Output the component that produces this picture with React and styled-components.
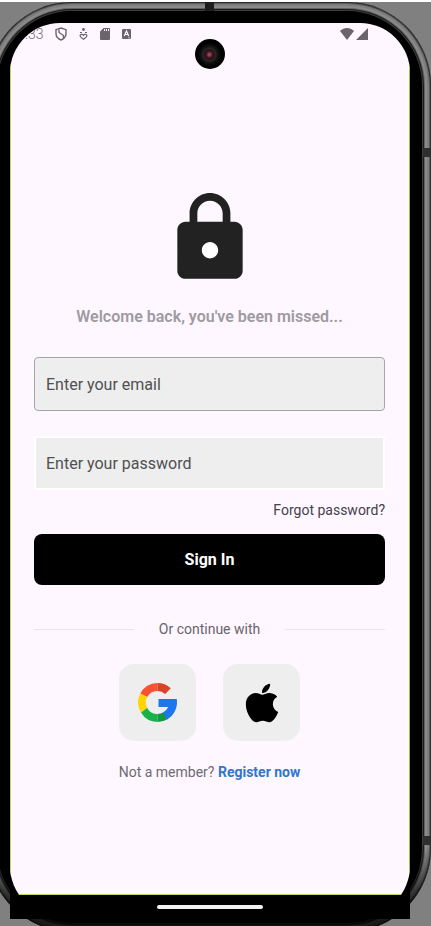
import React from "react";
import styled, { createGlobalStyle } from "styled-components";
import { FaApple } from "react-icons/fa";

const GlobalStyle = createGlobalStyle`
  *, *::before, *::after { box-sizing: border-box; }
  body {
    margin: 0;
    background: #808080;
    font-family: Roboto, "Liberation Sans", sans-serif;
  }
`;

const Stage = styled.div`
  display: flex;
  flex-direction: column;
  height: 100vh;
  min-height: 820px;
  overflow: hidden;
  border-top: 2px solid #ffffff;
`;

const Phone = styled.div`
  position: relative;
  flex: 1;
  display: flex;
  margin: 0 0 -6px -12px;
  padding: 21px 21px 13px 22px;
  border-radius: 84px;
  background: #000000;
  box-shadow:
    inset 0 0 0 1px #2c2c2c,
    inset 0 0 0 2px #5c5c5c,
    inset 0 0 0 4px #7e7e7e,
    inset 0 0 0 6px #8a8a8a,
    inset 0 0 0 7px #626262,
    inset 0 0 0 8px #1c1c1c,
    inset 0 0 0 9px #3c3c3c;

  &::after {
    content: "";
    position: absolute;
    inset: auto 0 0 0;
    height: 84px;
    border-radius: 0 0 84px 84px;
    background: linear-gradient(to bottom, rgba(0, 0, 0, 0), rgba(0, 0, 0, 0.8) 70%);
    pointer-events: none;
  }
`;

const TopBand = styled.span`
  position: absolute;
  top: 0;
  left: 50%;
  width: 9px;
  height: 9px;
  margin-left: -5px;
  background: #1e1e1e;
`;

const SideBand = styled.span`
  position: absolute;
  right: 0;
  top: ${(p) => p.$top};
  width: 8px;
  height: 9px;
  background: #2e2e2e;
`;

const Well = styled.div`
  position: relative;
  z-index: 1;
  flex: 1;
  display: flex;
  padding-bottom: 3px;
  border-radius: 50px 50px 0 0;
  background: #000000;
`;

const Screen = styled.div`
  flex: 1;
  display: flex;
  flex-direction: column;
  border-radius: 50px;
  overflow: hidden;
`;

const Display = styled.div`
  flex: 1;
  background: #fef7ff;
  border: solid #bdd75c;
  border-width: 0 1px 1px;
  border-right-color: #a5c040;
`;

const Camera = styled.span`
  position: absolute;
  top: 16px;
  left: 50%;
  width: 30px;
  height: 30px;
  margin-left: -15px;
  border-radius: 50%;
  background: radial-gradient(circle at 48% 52%, #8b4a58 0 1px, #4a1520 3px, #241016 5px, #2c2a2c 6px, #151515 8px, #0a0a0a 10px, #000000 12px);
`;

const StatusBar = styled.header`
  display: flex;
  align-items: center;
  justify-content: space-between;
  height: 22px;
  padding: 0 41px 0 14px;
  color: #6a656b;
`;

const StatusGroup = styled.div`
  display: flex;
  align-items: center;
  gap: ${(p) => p.$gap}px;
`;

const Clock = styled.span`
  font-size: 14px;
  line-height: 16px;
  font-weight: 300;
`;

const Form = styled.form`
  display: flex;
  flex-direction: column;
  align-items: center;
  padding: 144px 24px 24px 23px;
`;

const Welcome = styled.h1`
  margin: 20px 0 30px;
  font-size: 16px;
  line-height: 20px;
  font-weight: 600;
  color: #9f9aa1;
`;

const Field = styled.input`
  width: 100%;
  height: 54px;
  padding: 0 11px;
  border: ${(p) => (p.$outlined ? "1px solid #a6a5a8" : "2px solid #ffffff")};
  border-radius: ${(p) => (p.$outlined ? 4 : 2)}px;
  outline: none;
  background: #eeeeee;
  font: 400 16px/20px Roboto, sans-serif;
  color: #49454c;

  & + & { margin-top: 25px; padding: 0 10px; }
  &::placeholder { color: #505052; opacity: 1; }
`;

const ForgotLink = styled.a`
  align-self: flex-end;
  margin: 10px 0 14px;
  font-size: 14px;
  line-height: 20px;
  color: #45404a;
  text-decoration: none;
`;

const SignInButton = styled.button`
  width: 100%;
  height: 51px;
  border: 0;
  border-radius: 8px;
  background: #000000;
  font: 700 16px/20px Roboto, sans-serif;
  color: #ffffff;
`;

const Divider = styled.div`
  display: flex;
  align-items: center;
  gap: 25px;
  width: 100%;
  margin: 34px 0 25px;
  font-size: 14px;
  line-height: 20px;
  color: #69646c;

  &::before, &::after {
    content: "";
    flex: 1;
    height: 1px;
    background: #ebe5ed;
  }
`;

const Providers = styled.div`
  display: flex;
  gap: 27px;
`;

const ProviderButton = styled.button`
  display: flex;
  align-items: center;
  justify-content: center;
  width: 77px;
  height: 77px;
  padding: 0;
  border: 0;
  border-radius: 15px;
  background: #eeeeee;
  color: #000000;
`;

const Signup = styled.p`
  margin: 21px 0 0;
  font-size: 14px;
  line-height: 20px;
  color: #6e6971;
`;

const RegisterLink = styled.a`
  font-weight: 700;
  color: #2f77cc;
  text-decoration: none;
`;

const NavBar = styled.footer`
  display: flex;
  align-items: center;
  justify-content: center;
  height: 21px;
  padding-top: 3px;
  background: #000000;
`;

const Handle = styled.span`
  width: 106px;
  height: 4px;
  border-radius: 2px;
  background: #f2f2f2;
`;

const LockIcon = () => (
  <svg width="98" height="98" viewBox="0 0 24 24" aria-hidden="true">
    <circle cx="12" cy="15" r="2.4" fill="#ffffff" />
    <path
      fill="#222222"
      d="M18 8h-1V6c0-2.760-2.240-5-5-5S7 3.240 7 6v2H6c-1.100 0-2 .9-2 2v10c0 1.100.9 2 2 2h12c1.100 0 2-.9 2-2V10c0-1.100-.9-2-2-2zm-6 9c-1.100 0-2-.9-2-2s.9-2 2-2 2 .9 2 2-.9 2-2 2zm3.100-9H8.900V6c0-1.710 1.390-3.100 3.100-3.100 1.710 0 3.100 1.390 3.100 3.100v2z"
    />
  </svg>
);

const GoogleIcon = () => (
  <svg width="39" height="39" viewBox="0 0 39 39" aria-hidden="true">
    <path fill="#fa5130" d="M2.300 10.500A19.500 19.500 0 0 1 19.500 0V8A11.500 11.500 0 0 0 9.200 14z" />
    <path fill="#d8432a" d="M19.500 0A19.500 19.500 0 0 1 32.800 5.200L27.200 10.900A11.500 11.500 0 0 0 19.500 8z" />
    <path fill="#fed402" d="M2.300 10.500L9.200 14A11.500 11.500 0 0 0 9.200 25L3 29.500A19.500 19.500 0 0 1 2.300 10.500z" />
    <path fill="#19b149" d="M3 29.500L9.200 25A11.500 11.500 0 0 0 19.500 31V39A19.500 19.500 0 0 1 3 29.500z" />
    <path fill="#129a40" d="M19.500 31A11.500 11.500 0 0 0 25.500 29.300L29.500 36.200A19.500 19.500 0 0 1 19.500 39z" />
    <path fill="#1b78e6" d="M20.500 16H38.700A19.500 19.500 0 0 1 29 36.500L25 29.600A11.500 11.500 0 0 0 30.200 24H20.500z" />
  </svg>
);

const ShieldIcon = () => (
  <svg width="12" height="14" viewBox="0 0 12 14" fill="none" stroke="currentColor" strokeWidth="1.4" aria-hidden="true">
    <path d="M6 1L11 2.700V6.500C11 9.500 9 11.900 6 13C3 11.900 1 9.500 1 6.500V2.700z" />
    <path d="M4 2.500V5.500L8.500 8.500V11" />
  </svg>
);

const WellbeingIcon = () => (
  <svg width="9" height="12" viewBox="0 0 9 12" fill="none" stroke="currentColor" strokeWidth="1.2" aria-hidden="true">
    <circle cx="4.5" cy="1.500" r="1.4" fill="currentColor" stroke="none" />
    <path d="M1 4.500H3M6 4.500H8" />
    <path d="M4.500 7.300C3.700 6 1.200 6 1 7.700C1 9 3 10.200 4.500 11.300C6 10.200 8 9 8 7.700C7.800 6 5.300 6 4.500 7.300z" />
  </svg>
);

const CardIcon = () => (
  <svg width="10" height="12" viewBox="0 0 10 12" aria-hidden="true">
    <path fill="currentColor" d="M3.500 0H9a1 1 0 0 1 1 1V11a1 1 0 0 1-1 1H1a1 1 0 0 1-1-1V3.500z" />
    <path stroke="#fef7ff" strokeWidth="1" d="M4.500 1V3M6.500 1V3M8.500 1V3" />
  </svg>
);

const LetterIcon = () => (
  <svg width="9" height="10" viewBox="0 0 9 10" aria-hidden="true">
    <rect width="9" height="10" rx="1" fill="currentColor" />
    <path fill="none" stroke="#fef7ff" strokeWidth="1.2" d="M2.300 7L4.500 2L6.700 7M3 5.500H6" />
    <path stroke="#fef7ff" strokeWidth=".6" d="M6 8.700H8" />
  </svg>
);

const WifiIcon = () => (
  <svg width="14" height="12" viewBox="0 0 14 12" aria-hidden="true">
    <path fill="currentColor" d="M0 3C4-1 10-1 14 3L7 12z" />
  </svg>
);

const SignalIcon = () => (
  <svg width="12" height="12" viewBox="0 0 12 12" aria-hidden="true">
    <path fill="currentColor" d="M12 0V12H0z" />
  </svg>
);

export default function App() {
  return (
    <>
      <GlobalStyle />
      <Stage>
        <Phone>
          <TopBand />
          <SideBand $top="146px" />
          <SideBand $top="834px" />
          <Well>
            <Screen>
              <Display>
                <StatusBar>
                  <StatusGroup $gap={12}>
                    <Clock>:33</Clock>
                    <ShieldIcon />
                    <WellbeingIcon />
                    <CardIcon />
                    <LetterIcon />
                  </StatusGroup>
                  <StatusGroup $gap={2}>
                    <WifiIcon />
                    <SignalIcon />
                  </StatusGroup>
                </StatusBar>
                <Form onSubmit={(e) => e.preventDefault()}>
                  <LockIcon />
                  <Welcome>Welcome back, you've been missed...</Welcome>
                  <Field $outlined type="email" placeholder="Enter your email" aria-label="Email" />
                  <Field type="password" placeholder="Enter your password" aria-label="Password" />
                  <ForgotLink href="#forgot">Forgot password?</ForgotLink>
                  <SignInButton type="submit">Sign In</SignInButton>
                  <Divider>Or continue with</Divider>
                  <Providers>
                    <ProviderButton type="button" aria-label="Continue with Google">
                      <GoogleIcon />
                    </ProviderButton>
                    <ProviderButton type="button" aria-label="Continue with Apple">
                      <FaApple size={44} />
                    </ProviderButton>
                  </Providers>
                  <Signup>
                    Not a member? <RegisterLink href="#register">Register now</RegisterLink>
                  </Signup>
                </Form>
              </Display>
              <NavBar>
                <Handle />
              </NavBar>
            </Screen>
            <Camera />
          </Well>
        </Phone>
      </Stage>
    </>
  );
}
